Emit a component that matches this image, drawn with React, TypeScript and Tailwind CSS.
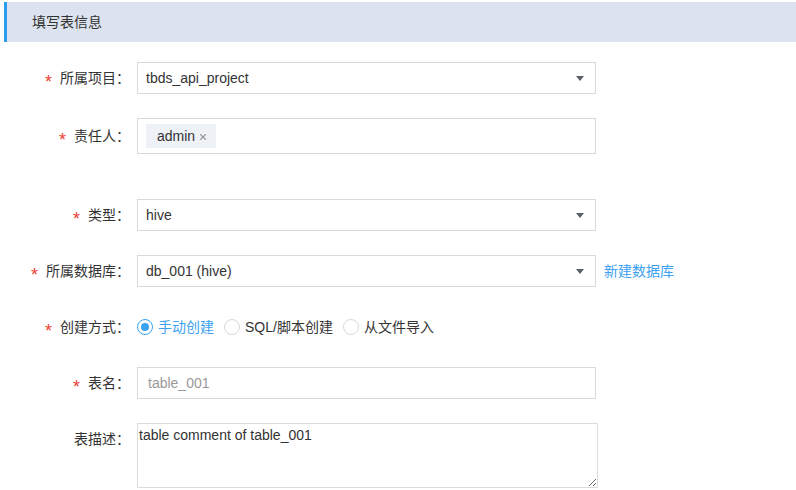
import React from 'react';
import { X } from 'lucide-react';

const Star = () => <span className="mr-[8px] mt-[8px] text-[18px] leading-none text-[#f04134]">*</span>;

// label column, right aligned, ends just before the control
const Label = ({ text, required = true }: { text: string; required?: boolean }) => (
  <div className="flex h-[32px] w-[126px] shrink-0 items-center justify-end text-[14px] text-[#333]">
    {required && <Star />}
    <span>{text}</span>
  </div>
);

const Arrow = () => (
  <span className="h-0 w-0 border-x-[4px] border-t-[5px] border-x-transparent border-t-[#5a5e66]" />
);

const Select = ({ value }: { value: string }) => (
  <div className="flex h-[32px] w-[459px] items-center justify-between border border-[#d9d9d9] pl-[8px] pr-[11px] text-[14px] text-[#333]">
    <span>{value}</span>
    <Arrow />
  </div>
);

const Radio = ({ label, checked }: { label: string; checked?: boolean }) => (
  <div className="mr-[10px] flex items-center gap-[5px]">
    <span
      className={
        checked
          ? 'flex h-[16px] w-[16px] items-center justify-center rounded-full border border-[#3ba1f0]'
          : 'flex h-[16px] w-[16px] items-center justify-center rounded-full border border-[#d9d9d9]'
      }
    >
      {checked && <span className="h-[8px] w-[8px] rounded-full bg-[#3ba1f0]" />}
    </span>
    <span className={checked ? 'text-[#3ba1f0]' : 'text-[#333]'}>{label}</span>
  </div>
);

const App = () => (
  <div className="h-[490px] w-[796px] overflow-hidden bg-white pl-[4px] pt-[2px] font-['Liberation_Sans','Noto_Sans_CJK_SC',sans-serif]">
    {/* section title */}
    <div className="flex h-[40px] items-center border-l-[3px] border-[#2b9cf2] bg-[#dce3ee] pl-[25px] text-[14px] text-[#333]">
      填写表信息
    </div>

    <div className="mt-[20px] flex flex-col">
      <div className="mb-[24px] flex items-start gap-[7px]">
        <Label text="所属项目：" />
        <Select value="tbds_api_project" />
      </div>

      <div className="mb-[45px] flex items-start gap-[7px]">
        <div className="flex h-[36px] items-center">
          <Label text="责任人：" />
        </div>
        <div className="flex h-[36px] w-[459px] items-center border border-[#d9d9d9] pl-[8px]">
          <span className="flex h-[24px] items-center bg-[#eef1f6] pl-[11px] pr-[8px] text-[14px] text-[#333]">
            admin
            <X size={10} strokeWidth={2.6} className="ml-[3px] mt-[1px] text-[#999]" />
          </span>
        </div>
      </div>

      <div className="mb-[24px] flex items-start gap-[7px]">
        <Label text="类型：" />
        <Select value="hive" />
      </div>

      <div className="mb-[24px] flex items-start gap-[7px]">
        <Label text="所属数据库：" />
        <Select value="db_001 (hive)" />
        <span className="ml-[1px] flex h-[32px] items-center text-[14px] text-[#3ba1f0]">新建数据库</span>
      </div>

      <div className="mb-[24px] flex items-start gap-[7px]">
        <Label text="创建方式：" />
        <div className="flex h-[32px] items-center text-[14px]">
          <Radio label="手动创建" checked />
          <Radio label="SQL/脚本创建" />
          <Radio label="从文件导入" />
        </div>
      </div>

      <div className="mb-[24px] flex items-start gap-[7px]">
        <Label text="表名：" />
        <input
          className="h-[32px] w-[459px] border border-[#d9d9d9] pl-[10px] text-[14px] text-[#333] outline-none placeholder:text-[#999]"
          placeholder="table_001"
        />
      </div>

      <div className="flex items-start gap-[7px]">
        <Label text="表描述：" required={false} />
        <textarea
          className="h-[65px] w-[461px] border border-[#dcdcdc] px-[1px] pt-[1px] text-[14px] leading-[20px] text-[#333] outline-none"
          defaultValue="table comment of table_001"
        />
      </div>
    </div>
  </div>
);

export default App;
